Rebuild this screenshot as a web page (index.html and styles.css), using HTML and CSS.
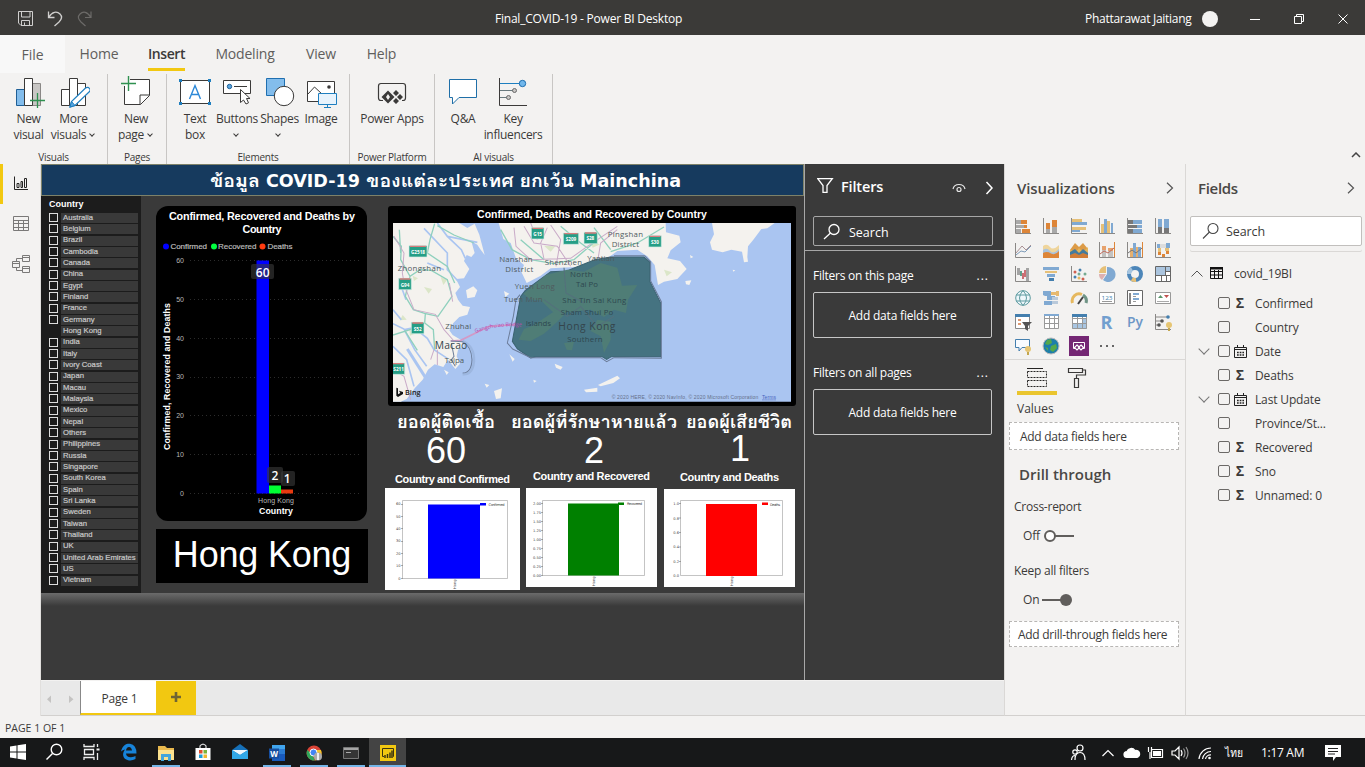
FILE: index.html
```html
<!DOCTYPE html>
<html lang="en">
<head>
<meta charset="utf-8">
<title>Final_COVID-19 - Power BI Desktop</title>
<link rel="stylesheet" href="styles.css">
</head>
<body>
<div class="app">
<header class="titlebar">
  <div class="quick">
    <svg viewBox="18 10 76 18" width="76" height="18" fill="none" stroke="#d0cfce" stroke-width="1"><path d="M19.5 11.5H33.500V25.500H22L19.500 23ZM22.500 11.500V17H31V11.500M22.500 25.500V20.500H30.500V25.500M25.500 22.500V25.500"/><path d="M49.500 11.500V17.500H55.500M50 17C53 11.500 58 11 61 14S62.500 19.500 60 22L55.500 26" stroke-width="1.300"/><path d="M92 11.500V17.500H86M91.500 17C88.500 11.500 84 11 81 14S79.500 19.500 82 22L86.500 26" stroke="#6c6a68" stroke-width="1.200"/></svg>
  </div>
  <span class="doc-title">Final_COVID-19 - Power BI Desktop</span>
  <span class="user">Phattarawat Jaitiang</span><i class="avatar"></i>
  <div class="wincontrols">
    <svg viewBox="1250 10 100 16" width="100" height="16" fill="none" stroke="#fff"><path d="M1250 18.500H1260M1294.500 15.500H1301.500V22.500H1294.500ZM1296.500 15.500V13.500H1303.500V20.500H1301.500M1338.500 13.500L1347.500 22.500M1347.500 13.500L1338.500 22.500"/></svg>
  </div>
</header>
<nav class="tabs">
  <span class="tab file">File</span><span class="tab home">Home</span><span class="tab insert"><b>Insert</b></span><span class="tab modeling">Modeling</span><span class="tab view">View</span><span class="tab help">Help</span>
</nav>
<section class="ribbon">
  <div class="group g-visuals">
    <div class="tools">
      <div class="tool"><svg viewBox="12 76 32 32"><path d="M15.500 89.500h8v16h-8z" fill="#83bdec" stroke="#1f5f96"/><path d="M31.500 83.500h8v22h-8z" fill="#c8c6c4" stroke="#8a8886"/><path d="M23.500 78.500h8v27h-8z" fill="#fff" stroke="#3b3a39"/><path d="M36.500 93V108M29 100.500H44" stroke="#2f9150" stroke-width="1.300"/></svg><span>New<br>visual</span></div>
      <div class="tool"><svg viewBox="57 76 32 32"><path d="M60.500 89.500h8v16h-8zM76.500 83.500h8v22h-8zM68.500 78.500h8v27h-8z" fill="#fff" stroke="#3b3a39"/><path d="M69 107L70.500 101.500L84.500 88Q87 86.500 88.500 88.500T88 92L74 105.500Z" fill="#fff" stroke="#1e7fc0" stroke-width="1.200"/><path d="M69 107l1.500-5.500 3.500 4z" fill="#5ba7e0" stroke="#1e7fc0"/></svg><span>More<br>visuals<i class="chev"></i></span></div>
    </div><small>Visuals</small>
  </div>
  <div class="group g-pages">
    <div class="tools">
      <div class="tool"><svg viewBox="120 76 32 32"><path d="M130 79.500H149.500V95.500L140.500 104.500H124.500V86" fill="#fff" stroke="#3b3a39"/><path d="M149.500 95H140V104.500" fill="none" stroke="#3b3a39"/><path d="M128.500 76V91M121 83.500H136" stroke="#2f9150" stroke-width="1.400"/></svg><span>New<br>page<i class="chev"></i></span></div>
    </div><small>Pages</small>
  </div>
  <div class="group g-elements">
    <div class="tools">
      <div class="tool"><svg viewBox="179 76 32 32"><path d="M180.500 80.500h29v23h-29z" fill="#fff" stroke="#3b3a39"/><path d="M179 79h3v3h-3zM208 79h3v3h-3zM179 102h3v3h-3zM208 102h3v3h-3z" fill="#1e7fc0"/><path d="M189.500 99L195 85.500 200.500 99M191.500 94.500H198.500" fill="none" stroke="#2b88d8" stroke-width="1.400"/></svg><span>Text<br>box</span></div>
      <div class="tool"><svg viewBox="221 76 32 32"><path d="M223.500 80.500h27v13h-27z" fill="#fff" stroke="#3b3a39"/><circle cx="229.500" cy="86.500" r="2.200" fill="#5ba7e0" stroke="#1f5f96"/><path d="M234 86.500H247" stroke="#3b3a39"/><path d="M240.500 89.500V102.500L243.500 100L246 104L248.500 102.800L246.500 98.500H250Z" fill="#fff" stroke="#3b3a39"/></svg><span>Buttons<br><i class="chev solo"></i></span></div>
      <div class="tool"><svg viewBox="264 76 32 32"><path d="M266.500 78.500h18v17h-18z" fill="#83bdec" stroke="#1f6fb0"/><circle cx="284" cy="96" r="9.700" fill="#fff" stroke="#3b3a39"/></svg><span>Shapes<br><i class="chev solo"></i></span></div>
      <div class="tool"><svg viewBox="305 76 32 32"><path d="M307.500 81.500h27v20h-27z" fill="#fff" stroke="#3b3a39"/><path d="M308 94L314.500 87L322 94" fill="none" stroke="#3b3a39"/><circle cx="329" cy="87" r="1.800" fill="#3b3a39"/><path d="M318.500 93.500h18v11h-18zM327.500 104.500v3M324 107.500h7" fill="#e8f3fc" stroke="#1e7fc0"/></svg><span>Image</span></div>
    </div><small>Elements</small>
  </div>
  <div class="group g-platform">
    <div class="tools">
      <div class="tool"><svg viewBox="376 76 32 32"><path d="M383 100.500H381Q378.500 100.500 378.500 98V86Q378.500 83.500 381 83.500H403Q405.500 83.500 405.500 86V98Q405.500 100.500 403 100.500H402" fill="none" stroke="#3b3a39" stroke-width="1.200"/><path fill="#3b3a39" fill-rule="evenodd" d="M388 90.500l6.500 6.500-6.500 6.500-6.500-6.500zM388 94l-2 3 2 3 2-3z"/><path d="M396 90l3 3-3 3-3-3zM400 94l3 3-3 3-3-3zM396 98l3 3-3 3-3-3z" fill="#3b3a39"/></svg><span>Power Apps</span></div>
    </div><small>Power Platform</small>
  </div>
  <div class="group g-ai">
    <div class="tools">
      <div class="tool"><svg viewBox="447 76 32 32"><path d="M449.500 79.500H476.500V97.500H459L452.500 104V97.500H449.500Z" fill="#fff" stroke="#1f6fa8"/></svg><span>Q&amp;A</span></div>
      <div class="tool"><svg viewBox="497 76 32 32"><path d="M499.500 78V105.500H527" fill="none" stroke="#3b3a39"/><path d="M500 83.500h20" stroke="#1e7fc0"/><path d="M500 90.500h14M500 97.500h8" stroke="#69797e"/><circle cx="522.500" cy="83.500" r="3.200" fill="#71b7ec" stroke="#1f6fb0"/><circle cx="514.500" cy="90.500" r="2" fill="#c8c6c4" stroke="#69696a"/><circle cx="508.500" cy="97.500" r="2" fill="#c8c6c4" stroke="#69696a"/></svg><span>Key<br>influencers</span></div>
    </div><small>AI visuals</small>
  </div>
  <svg class="collapse" viewBox="0 0 10 6" width="10" height="6"><path d="M1 5L5 1L9 5" fill="none" stroke="#444" stroke-width="1.500"/></svg>
</section>

<main class="main">
<aside class="rail">
  <div class="rail-item on"><svg viewBox="13 177 16 16" width="16" height="16" fill="none" stroke="#252423"><path d="M14.500 177.500V190.500H28M17 184.500h2v4h-2zM21 182.500h1.500v6h-1.500zM24.500 179.500h2v9h-2z"/></svg></div>
  <div class="rail-item"><svg viewBox="13 216 17 16" width="17" height="16" fill="none" stroke="#7a7978"><path d="M13.500 216.500h15v14h-15zM13.500 220.500h15M13.500 223.500h15M13.500 227.500h15M18.500 220v11M23.500 220v11"/></svg></div>
  <div class="rail-item"><svg viewBox="12 255 19 19" width="19" height="19" fill="none" stroke="#7a7978"><path d="M22.500 255.500h7v6h-7zM12.500 261.500h7v6h-7zM22.500 266.500h7v6h-7zM22.500 258.500H16.500V261.500M16.500 267.500V270.500H22.500M22.500 257.500h7M12.500 263.500h7M22.500 268.500h7"/></svg></div>
</aside>
<div class="center">
<div class="workspace">
<section class="report">
  <h1 class="banner"><svg viewBox="41 164 763 32" width="763" height="32"><text x="210" y="187" textLength="471" lengthAdjust="spacingAndGlyphs" class="banner-text">ข้อมูล COVID-19 ของแต่ละประเทศ ยกเว้น Mainchina</text></svg></h1>
  <div class="canvas">
    <div class="slicer"><b>Country</b>
      <ul><li>Australia</li><li>Belgium</li><li>Brazil</li><li>Cambodia</li><li>Canada</li><li>China</li><li>Egypt</li><li>Finland</li><li>France</li><li>Germany</li><li class="sel">Hong Kong</li><li>India</li><li>Italy</li><li>Ivory Coast</li><li>Japan</li><li>Macau</li><li>Malaysia</li><li>Mexico</li><li>Nepal</li><li>Others</li><li>Philippines</li><li>Russia</li><li>Singapore</li><li>South Korea</li><li>Spain</li><li>Sri Lanka</li><li>Sweden</li><li>Taiwan</li><li>Thailand</li><li>UK</li><li>United Arab Emirates</li><li>US</li><li>Vietnam</li></ul>
    </div>
    <div class="col-chart">
      <svg class="barchart" viewBox="156 206 211 315" width="211" height="315">
        <g class="ct" text-anchor="middle"><text x="262" y="220" textLength="186">Confirmed, Recovered and Deaths by</text><text x="262" y="233" textLength="39">Country</text></g>
        <g class="lg"><circle cx="166" cy="246.500" r="3" fill="#0000ff"/><circle cx="214" cy="246.500" r="3" fill="#00ff40"/><circle cx="262.500" cy="246.500" r="3" fill="#ff3b10"/><text x="170.500" y="249" textLength="36.500">Confirmed</text><text x="218" y="249" textLength="38.500">Recovered</text><text x="267.500" y="249" textLength="25">Deaths</text></g>
        <path d="M190 260.500H360M190 299.500H360M190 338.500H360M190 377.500H360M190 415.500H360M190 454.500H360M190 493.500H360" stroke="#2c2c2c" stroke-dasharray="1 3"/>
        <g class="ax" text-anchor="end"><text x="184" y="263">60</text><text x="184" y="301.500">50</text><text x="184" y="340.500">40</text><text x="184" y="379">30</text><text x="184" y="418">20</text><text x="184" y="457">10</text><text x="184" y="496">0</text></g>
        <path d="M256.500 260.500H269V493.500H256.500Z" fill="#0000ff"/><path d="M269 485.500h12v8h-12z" fill="#00ff33"/><path d="M281 489.500h12v4h-12z" fill="#e83a10"/>
        <g fill="#3a3a3a" fill-opacity=".6"><rect x="251" y="264" width="23" height="15" rx="2"/><rect x="267" y="467" width="16" height="16" rx="2"/><rect x="281" y="471" width="14" height="15" rx="2"/></g>
        <g class="dl" text-anchor="middle"><text x="262.700" y="277">60</text><text x="275" y="480">2</text><text x="287.300" y="483">1</text></g>
        <text class="ax" x="258" y="503" textLength="36">Hong Kong</text><text class="at" x="259" y="514" textLength="34">Country</text>
        <text class="at" transform="translate(170 450) rotate(-90)" textLength="147">Confirmed, Recovered and Deaths</text>
      </svg>
      <div class="namecard">Hong Kong</div>
    </div>
    <div class="col-map">
      <div class="mapcard"><h2>Confirmed, Deaths and Recovered by Country</h2>
      <svg class="map" viewBox="27 70 1194 536" width="398" height="178.700" preserveAspectRatio="none">
        <path fill="#aac5f1" d="M27 70H1221V606H27Z"/>
        <g fill="#f4f2ee">
          <path d="M27 70H226L250 85 272 72 286 105 302 166 290 150 280 135 262 125 272 160 262 172 248 166 240 184 256 208 240 236 216 238 228 262 214 280 222 300 236 318 258 322 250 345 226 352 208 370 196 392 206 406 230 420 240 440 222 450 218 470 228 492 214 508 192 480 178 502 152 494 132 510 116 540 92 566 68 598 50 606H27Z"/>
          <path d="M246 272L268 260 280 272 272 292 250 296Z"/>
          <path d="M344 70H845L846 98 886 108 890 128 860 152 850 176 888 184 908 208 880 238 840 246 822 256 812 196 790 170 760 150 700 154 678 170 620 200 500 206 470 228 428 250 412 216 420 196 396 176 380 130 358 118Z"/>
          <path d="M984 70H1172L1150 86 1132 88 1108 120 1092 140 1090 172 1092 186 1080 188 1074 156 1042 150 1016 158 984 150 978 128 990 104Z"/>
          <path d="M904 244L922 242 916 256 906 254ZM642 556L700 528 708 536 688 550 650 560ZM600 570L640 564 640 576 606 578ZM512 492L536 502 530 510 516 504ZM330 574L354 566 350 596 336 598ZM376 464L392 478 386 486ZM302 552l14 4-8 8zM448 540l10 4-8 5zM360 274L376 282 364 292ZM918 166L928 172 920 176ZM1046 210l8 2-6 4zM180 510l14 8-6 8z"/>
        </g>
        <g fill="#d3e1bb" opacity=".75"><path d="M120 262l24 6-10 14zM170 232l20 8-12 16zM480 138l34 2-14 16zM620 126l28 8-22 10zM840 210l24 8-16 12zM76 390l22 10-20 8zM86 228l16 8-12 8zM56 346l12 14-20 2z"/></g>
        <g fill="none" stroke="#aac5f1" stroke-width="5"><path d="M160 70L190 110 232 150 244 176M190 110 280 128M120 86L190 160 190 210 222 244M27 372L60 388 92 450 128 500M62 390 90 384 130 416 150 450 190 476M27 330L52 360M27 440L68 480 90 560M48 250L66 300M130 190L180 210"/><path d="M70 448L126 536" stroke-width="9"/></g>
        <g fill="none" stroke="#8fd0bd" stroke-width="4"><path d="M27 110L52 140 50 180 78 230 108 210 142 212 190 240 204 290 162 350 124 342 122 370 148 390 152 450M152 72L138 120 130 160 190 200 212 250M27 406L90 386 120 370M62 392L100 452M78 230L64 290 88 330 124 342M160 78L210 106 270 130M50 160L46 90M350 90L384 150 440 180 510 192 570 180 640 120M410 120L480 180M530 80L590 130 630 160M680 150L650 110 630 84M680 156L760 130 840 82"/></g>
        <g fill="none" stroke="#c9abc8" stroke-width="3"><path d="M30 110L60 160 55 220 62 260 90 330 154 344 180 390 210 424M420 80L450 130 520 140 560 200M390 84L396 140 440 180 560 176 610 140 700 80M440 70L460 120M490 84L470 130 480 178M500 76L530 120 516 200M700 90L650 130 640 190M27 510L60 530 80 600M196 250L206 306M160 450L160 496M150 450L140 480"/></g>
        <g fill="none" stroke="#d29ac6" stroke-width="5"><path d="M200 424L230 422 316 380 410 374"/></g>
        <path d="M385 425L410 290 424 272 500 216 548 214 632 180 680 172H780L798 188 798 246 830 310V471H682L668 479 654 471H456L440 475 400 448Z" fill="#457381" stroke="#3b6270" stroke-width="3"/>
        <g fill="#4f7d76"><path d="M418 282L486 226 550 210 600 216 650 190 700 204 714 258 760 256 732 300 726 340 690 330 660 352 620 330 560 336 510 340 470 302 440 300Z"/><path d="M450 376L530 322 552 334 520 366 480 402 440 424 404 420 420 388ZM640 360L680 366 680 420 660 460 650 410 620 394ZM540 430L570 426 564 452 548 450Z"/></g>
        <path d="M408 285L396 300 388 350 370 430 386 448 440 474H650L668 486 690 474 832 476V306L800 244V186L782 168 690 168M200 424L236 426Q262 440 264 480Q262 520 236 520M202 430L210 470 202 480 214 500" fill="none" stroke="#6b7c99" stroke-width="3"/>
        <path d="M236 424Q272 440 270 485Q266 526 236 524" fill="none" stroke="#90a9d0" stroke-width="7" opacity=".5"/>
        <g fill="none" stroke="#54707c" stroke-width="3"><path d="M480 300L550 350 590 320 640 380 690 350M540 204L546 280 600 310"/></g>
        <g fill="#259e86" stroke="#d5ede6" stroke-width="2"><path d="M75 138h54v34H75zM44 236h38v34H44zM82 368h38v34H82zM24 490h38v34H24zM442 84h38v34h-38zM538 100h46v34h-46zM600 98h40v34h-40zM794 108h38v34h-38z"/></g>
        <g stroke="#d87c7c" stroke-width="4"><path d="M78 140h48M47 238h32M85 370h32M27 492h32M445 86h32M541 102h40M603 100h34M797 110h32"/></g>
        <g class="shield" text-anchor="middle"><text x="102" y="163">G2518</text><text x="63" y="262">G94</text><text x="101" y="393">S52</text><text x="44" y="515">S211</text><text x="461" y="109">G15</text><text x="561" y="125">S209</text><text x="619" y="121">S28</text><text x="813" y="133">S30</text></g>
        <g class="ml"><text x="41" y="214" textLength="130">Zhongshan</text><text x="346" y="188" textLength="100">Nanshan</text><text x="364" y="217" textLength="84">District</text><text x="482" y="196" textLength="112">Shenzhen</text><text x="610" y="185" textLength="82">Yantian</text><text x="671" y="113" textLength="106">Pingshan</text><text x="683" y="141" textLength="82">District</text><text x="392" y="268" textLength="120">Yuen Long</text><text x="360" y="307" textLength="116">Tuen Mun</text><text x="184" y="389" textLength="78">Zhuhai</text><text x="182" y="489" textLength="58">Taipa</text></g>
        <g class="ml inside"><text x="558" y="231" textLength="68">North</text><text x="576" y="262" textLength="66">Tai Po</text><text x="535" y="310" textLength="192">Sha Tin Sai Kung</text><text x="530" y="346" textLength="158">Sham Shui Po</text><text x="425" y="378" textLength="76">Islands</text><text x="550" y="427" textLength="106">Southern</text></g>
        <g class="ml big"><text x="152" y="449" textLength="98">Macao</text><text x="523" y="390" textLength="171">Hong Kong</text></g>
        <path id="bridge" d="M275 400Q330 376 410 380" fill="none"/><text class="bridge"><textPath href="#bridge">Gangzhu'ao Bridge</textPath></text>
        <path d="M37 564L42 566V584L49 580 45 573 57 577V583L42 592 37 588Z" fill="#111"/>
        <text class="bing" x="63" y="585" textLength="47">Bing</text>
        <g class="copy"><text x="683" y="597" textLength="440">© 2020 HERE, © 2020 NavInfo, © 2020 Microsoft Corporation</text><text x="1134" y="597" textLength="42" class="terms">Terms</text></g>
      </svg></div>
      <svg class="kpis" viewBox="385 406 419 82" width="419" height="82">
        <g class="th"><text x="397" y="428" textLength="98" lengthAdjust="spacingAndGlyphs">ยอดผู้ติดเชื้อ</text><text x="511" y="428" textLength="166" lengthAdjust="spacingAndGlyphs">ยอดผู้ที่รักษาหายแล้ว</text><text x="686" y="428" textLength="106" lengthAdjust="spacingAndGlyphs">ยอดผู้เสียชีวิต</text></g>
        <g class="num"><text x="426" y="463" textLength="40">60</text><text x="584" y="463">2</text><text x="730" y="461">1</text></g>
        <g class="cap"><text x="395" y="483" textLength="115">Country and Confirmed</text><text x="533" y="480" textLength="117">Country and Recovered</text><text x="680" y="481" textLength="99">Country and Deaths</text></g>
      </svg>
      <div class="plots">
        <svg class="p1" viewBox="385 488 135 102" width="135" height="102"><path class="box" d="M402.500 500.500h105v78h-105z"/><path fill="#00f" d="M428 504.500h52v74h-52zM480 503h6v2.500h-6z"/><g class="tk" text-anchor="end"><text x="400.500" y="505">60</text><text x="400.500" y="517.500">50</text><text x="400.500" y="530">40</text><text x="400.500" y="542">30</text><text x="400.500" y="554.500">20</text><text x="400.500" y="567">10</text><text x="400.500" y="579.500">0</text></g><path class="ticks" d="M401 504.500h2m-2 12h2m-2 12h2m-2 13h2m-2 12h2m-2 12h2m-2 13h2"/><text class="tk" x="488.500" y="505.500" textLength="16">Confirmed</text><text class="tk" transform="translate(455.500 589) rotate(-90)">Hong</text></svg>
        <svg class="p2" viewBox="526 488 131 99" width="131" height="99"><path class="box" d="M542.500 500.500h102v75h-102z"/><path fill="#008000" d="M568 503.500h51v72h-51zM618 502.500h6v2.500h-6z"/><g class="tk" text-anchor="end"><text x="541" y="504.500">2.00</text><text x="541" y="513.500">1.75</text><text x="541" y="522.500">1.50</text><text x="541" y="531.500">1.25</text><text x="541" y="540.500">1.00</text><text x="541" y="549.500">0.75</text><text x="541" y="558.500">0.50</text><text x="541" y="567.500">0.25</text><text x="541" y="576.500">0.00</text></g><path class="ticks" d="M541 503.500h2m-2 9h2m-2 9h2m-2 9h2m-2 9h2m-2 9h2m-2 9h2m-2 9h2m-2 9h2"/><text class="tk" x="627" y="505" textLength="15">Recovered</text><text class="tk" transform="translate(594.500 586) rotate(-90)">Hong</text></svg>
        <svg class="p3" viewBox="664 489 131 98" width="131" height="98"><path class="box" d="M680.500 500.500h102v75h-102z"/><path fill="#f00" d="M706 504h51v72h-51zM762 502.500h6v2.500h-6z"/><g class="tk" text-anchor="end"><text x="679" y="505">1.0</text><text x="679" y="519.500">0.8</text><text x="679" y="534">0.6</text><text x="679" y="548">0.4</text><text x="679" y="562.500">0.2</text><text x="679" y="577">0.0</text></g><path class="ticks" d="M679 503.500h2m-2 14.500h2m-2 14.500h2m-2 14.500h2m-2 14.500h2"/><text class="tk" x="770" y="505.500" textLength="10">Deaths</text><text class="tk" transform="translate(732.500 586) rotate(-90)">Hong</text></svg>
      </div>
    </div>
  </div>
  <div class="edge"></div>
</section>
<aside class="filters">
  <div class="fhead"><svg viewBox="817 179 17 16" width="17" height="16"><path d="M817.700 179.700H832.300L827 186.500V193.300H823V186.500Z" fill="none" stroke="#fff" stroke-width="1.300"/></svg><b>Filters</b>
    <svg class="eye" viewBox="952 181 14 12" width="14" height="12" fill="none" stroke="#e6e6e6" stroke-width="1.200"><path d="M953 188Q954 183.500 959 183.500T965 188"/><circle cx="959" cy="188.500" r="2"/></svg>
    <svg class="fgo" viewBox="985 181 9 14" width="9" height="14"><path d="M986.500 182L992 188 986.500 194" fill="none" stroke="#fff" stroke-width="1.500"/></svg></div>
  <div class="fsearch"><svg viewBox="823 222 18 18" width="18" height="18" fill="none" stroke="#fff" stroke-width="1.300"><circle cx="834" cy="228.500" r="5"/><path d="M830.500 232L824 238"/></svg>Search</div>
  <div class="fsec"><p>Filters on this page<i>...</i></p><div class="well">Add data fields here</div></div>
  <div class="fsec"><p>Filters on all pages<i>...</i></p><div class="well">Add data fields here</div></div>
</aside>
</div>
<footer class="pagetabs">
  <div class="arrows"><svg viewBox="47 694 28 10" width="28" height="10" fill="#c4c3c2"><path d="M51 695.500V703L47 699.200ZM69 695.500V703L73.500 699.200Z"/></svg></div>
  <div class="page">Page 1</div><div class="plus"><svg viewBox="0 0 12 12" width="12" height="12"><path d="M6 1V11M1 6H11" stroke="#6f6534" stroke-width="2.600"/></svg></div>
</footer>
</div>

<aside class="viz">
  <div class="panehead"><b>Visualizations</b><svg viewBox="0 0 8 12" width="8" height="12"><path d="M1 .700L6.500 6 1 11.300" fill="none" stroke="#555" stroke-width="1.200"/></svg></div>
  <div class="icons">
    <svg viewBox="0 0 18 18"><path d="M2 3h5v4H2zM2 8h9v3H2zM2 12h5v4H2z" fill="#a8a8a8"/><path d="M7 3h6v4H7zM10 8h3v3h-3zM8 12h8v4H8z" fill="#dd8538"/><path class="axis" d="M1.500 1V16.500H17"/></svg>
    <svg viewBox="0 0 18 18"><path d="M4 12h4v4H4zM10 10h5v6h-5z" fill="#a8a8a8"/><path d="M4 6h4v6H4zM10 3h5v7h-5z" fill="#dd8538"/><path class="axis" d="M1.500 1V16.500H17"/></svg>
    <svg viewBox="0 0 18 18"><path d="M2 2h10v3H2zM2 10h14v3H2z" fill="#e6c078"/><path d="M2 5h15v3H2zM2 13h8v2H2z" fill="#80a9d2"/><path class="axis" d="M1.500 1V16.500H17"/></svg>
    <svg viewBox="0 0 18 18"><path d="M3 7h3v9H3zM9 4h3v12H9z" fill="#e6c078"/><path d="M6 2h3v14H6zM13 6h2v10h-2z" fill="#80a9d2"/><path class="axis" d="M1.500 1V16.500H17"/></svg>
    <svg viewBox="0 0 18 18"><path d="M2 3h5v4H2zM2 8h9v3H2zM2 12h5v4H2z" fill="#777"/><path d="M7 3h9v4H7zM11 8h5v3h-5zM7 12h9v4H7z" fill="#80a9d2"/><path class="axis" d="M1.500 1V16.500H17"/></svg>
    <svg viewBox="0 0 18 18"><path d="M4 10h4v6H4zM10 11h5v5h-5z" fill="#777"/><path d="M4 2h4v8H4zM10 2h5v9h-5z" fill="#80a9d2"/><path class="axis" d="M1.500 1V16.500H17"/></svg>
    <svg viewBox="0 0 18 18"><path class="axis" d="M1.500 2V16.500H17"/><path d="M2 12L8 5 12 9 17 4" fill="none" stroke="#a99194"/><path d="M2 14L7 10 11 11 17 5" fill="none" stroke="#7d9bb8"/></svg>
    <svg viewBox="0 0 18 18"><path d="M1 5Q5 2 8 6T17 4V12L8 12 1 9Z" fill="#efd59c"/><path d="M1 9Q5 6 8 10T17 8V14H1Z" fill="#a8c3de"/><path d="M1 12Q5 10 9 12.500T17 10V17H1Z" fill="#dd8538"/></svg>
    <svg viewBox="0 0 18 18"><path d="M0 9L5 2 9 6 13 2 18 8V17H0Z" fill="#dc9b47"/><path d="M0 8L5 12 9 7 13 11 18 6V12H0Z" fill="#e5b65b"/><path d="M0 11L5 8 9 12 13 8 18 12V15H0Z" fill="#447b9d"/><path d="M0 14L5 12 9 14 13 12 18 14V17H0Z" fill="#d17d37"/></svg>
    <svg viewBox="0 0 18 18"><path d="M4 5h4v4H4zM10 7h5v3h-5z" fill="#e7a26c"/><path d="M4 9h4v7H4zM10 10h5v6h-5z" fill="#c4c2c0"/><path class="axis" d="M1.500 1V16.500H17"/><path d="M16.500 1V16" stroke="#dd8538"/><path d="M2 13L6 10 10 12 16 7" fill="none" stroke="#c26b5a"/></svg>
    <svg viewBox="0 0 18 18"><path d="M4 7h3v9H4zM10 6h2v10h-2z" fill="#e6b06e"/><path d="M7 2h3v14H7zM12 6h3v10h-3z" fill="#80a9d2"/><path class="axis" d="M1.500 1V16.500H17"/><path d="M16.500 1V16" stroke="#dd8538"/><path d="M2 12L6 9 10 12 16 7" fill="none" stroke="#777"/></svg>
    <svg viewBox="0 0 18 18"><path d="M3 3h3v4H3zM12 2h4v5h-4z" fill="#80a9d2"/><path d="M4 7h3v4H4zM11 7h4v3h-4z" fill="#e6c078"/><path d="M4 11h3v3H4zM8 13h3v3H8zM12 10h3v3h-3z" fill="#dd8538"/><path d="M6 3h6v4H6z" fill="#ddd"/><path class="axis" d="M1.500 1V16.500H17"/></svg>
    <svg viewBox="0 0 18 18"><path d="M3 3h3v7H3zM12 3h3v13h-3z" fill="#a3a3a3"/><path d="M6 6h2v5H6z" fill="#61a08b"/><path d="M8 8h2v6H8zM10 5h2v7h-2z" fill="#cc6f74"/><path class="axis" d="M1.500 1V16.500H17"/></svg>
    <svg viewBox="0 0 18 18"><path d="M1 2h16v3H1zM5 9h8v3H5z" fill="#80a9d2"/><path d="M3 6h12v2H3z" fill="#e6c078"/><path d="M7 13h5v3H7z" fill="#447fae"/></svg>
    <svg viewBox="0 0 18 18"><path class="axis" d="M1.500 1V16.500H17"/><g fill="#447fae"><circle cx="10" cy="5" r="1.500"/><circle cx="5" cy="12" r="1.500"/></g><g fill="#cf5f50"><circle cx="5" cy="7" r="1.500"/><circle cx="13" cy="14" r="1.500"/></g><g fill="#75aa90"><circle cx="9" cy="9" r="1.500"/><circle cx="15" cy="9" r="1.500"/></g><circle cx="9" cy="13" r="1.500" fill="#e6b85e"/></svg>
    <svg viewBox="0 0 18 18"><path d="M9 9V2A7.500 7.500 0 1 1 5 15Z" fill="#80a9d2"/><path d="M8 9L4 15A7 7 0 0 1 1 9Z" fill="#ddb0b0"/><path d="M8 8H1A7 7 0 0 1 8 1Z" fill="#e6c078"/></svg>
    <svg viewBox="0 0 18 18" fill="none" stroke-width="4"><circle cx="9" cy="9" r="6" stroke="#4d86b9"/><path d="M3 9A6 6 0 0 1 6 4" stroke="#a5c4df"/><path d="M6 14A6 6 0 0 0 10 15" stroke="#e6c078"/></svg>
    <svg viewBox="0 0 18 18"><path d="M1.500 1.500h15v15h-15z" fill="#fff"/><path d="M2 2h9v8H2zM12 2h5v4h-5z" fill="#abc5df"/><path d="M1.500 1.500h15v15h-15zM1.500 10.500h15M11.500 1.500v9M11.500 6.500h5M7.500 10.500v6M12.500 10.500v6" fill="none" stroke="#666"/></svg>
    <svg viewBox="0 0 18 18" fill="none" stroke="#5d9a9f"><circle cx="9" cy="9" r="7.300" fill="#eef7fb"/><path d="M9 1.500Q2 9 9 16.500M9 1.500Q16 9 9 16.500M2 6H16M2 12H16"/></svg>
    <svg viewBox="0 0 18 18"><path d="M1 2h8v5H3L1 6zM5 7h8v4H5zM2 12h8v4H2z" fill="#80a9d2"/><path d="M9 3h5v3H9zM14 2h3v5h-3z" fill="#e6b970"/><path d="M10 8h6v3h-6zM10 12h6v3h-6z" fill="#b9c9da"/></svg>
    <svg viewBox="0 0 18 18" fill="none"><path d="M2.500 14A7 7 0 0 1 12 5.500" stroke="#e6b85e" stroke-width="3"/><path d="M13 6A7 7 0 0 1 16 14" stroke="#6f9485" stroke-width="3"/><path d="M8 15L13 8" stroke="#444" stroke-width="2"/></svg>
    <svg viewBox="0 0 18 18"><path d="M1.500 3.500h15v11h-15z" fill="#fff" stroke="#999"/><text x="3.500" y="10.500" textLength="11" lengthAdjust="spacingAndGlyphs" class="n123">123</text><path d="M4 12.500h10" stroke="#999"/></svg>
    <svg viewBox="0 0 18 18"><path d="M1.500 1.500h15v15h-15z" fill="#fff" stroke="#666"/><path d="M4 4v11" stroke="#888" stroke-width="2"/><path d="M7 5h6M7 10h6" stroke="#80a9d2" stroke-width="2"/><path d="M7 7.500h3M7 12.500h3" stroke="#999"/></svg>
    <svg viewBox="0 0 18 18"><path d="M1.500 3.500h15v11h-15z" fill="#fff" stroke="#999"/><path d="M4 9l2.500-3L9 9z" fill="#58956a"/><path d="M10 6h5l-2.500 3z" fill="#c0504d"/><path d="M3 12.500h12" stroke="#aaa"/></svg>
    <svg viewBox="0 0 18 18"><path d="M1.500 2.500h14v13h-14z" fill="#fff" stroke="#888"/><path d="M1 1h15v3H1z" fill="#447fae"/><path d="M4 6h3v2H4zM4 10h3v2H4z" fill="#dd9a72"/><path d="M8 9h10l-4 4v5l-3-2v-3z" fill="#555"/></svg>
    <svg viewBox="0 0 18 18"><path d="M2.500 1.500h14v14h-14zM2.500 5.500h14M2.500 10.500h14M7.500 2v14M12.500 2v14" fill="#fff" stroke="#999"/><path d="M2 1h15v2H2z" fill="#80a9d2"/></svg>
    <svg viewBox="0 0 18 18"><path d="M2.500 1.500h14v14h-14z" fill="#fff"/><path d="M12 6h5v10h-5zM2 11h15v5H2z" fill="#a9c6e2"/><path d="M2.500 1.500h14v14h-14zM2.500 5.500h14M2.500 10.500h14M7.500 2v14M12.500 2v14" fill="none" stroke="#999"/><path d="M2 1h15v3H2z" fill="#447fae"/></svg>
    <svg viewBox="0 0 18 18"><text x="2.500" y="15.500" class="letterR">R</text></svg>
    <svg viewBox="0 0 18 18"><text x="1" y="14" textLength="16" lengthAdjust="spacingAndGlyphs" class="letterPy">Py</text></svg>
    <svg viewBox="0 0 18 18"><path class="axis" d="M1.500 1V16.500H17M2 4h13M2 8h7M2 12h4"/><circle cx="14" cy="4" r="1.800" fill="#447fae"/><circle cx="8" cy="8" r="1.800" fill="#555"/><circle cx="5" cy="12" r="1.800" fill="#555"/><circle cx="15" cy="12" r="3" fill="#e6c573"/><path d="M14 15h2v3h-2z" fill="#c3a64f"/></svg>
    <svg viewBox="0 0 18 18"><path d="M1.500 2.500h14v8H8L5 14v-3.500H1.500z" fill="#f8fbff" stroke="#447fae"/><circle cx="14" cy="12" r="3" fill="#e6c573"/><path d="M13 15h2v3h-2z" fill="#c3a64f"/></svg>
    <svg viewBox="0 0 18 18"><circle cx="9" cy="9" r="8" fill="#1e7eaa" stroke="#bbb"/><path d="M5 3l4-1 1 4-4 2-3-1zM9 9l5-2 1 4-4 4-3-2zM3 10l3 1v3z" fill="#55a84b"/></svg>
    <svg class="purple" viewBox="0 0 20 20"><path d="M0 0h20v20H0z" fill="#742774"/><path d="M6 12.500H4.500v-6h11v6H14" fill="none" stroke="#fff"/><path d="M8 9l2.500 2.500L8 14l-2.500-2.500zM12 9l2.500 2.500L12 14l-2.500-2.500z" fill="none" stroke="#fff" stroke-width="1.200"/></svg>
    <svg viewBox="0 0 18 18" fill="#666"><path d="M2 8h2v2H2zM8 8h2v2H8zM14 8h2v2h-2z"/></svg>
  </div>
  <div class="modes"><div class="mode on"><svg viewBox="1026 366 22 22" width="22" height="22" fill="none" stroke="#252423"><path d="M1027 367.500h16"/><path d="M1027.500 370.500h19v6h-19zM1027.500 379.500h19v6h-19z" stroke-dasharray="2 1"/></svg></div><div class="mode"><svg viewBox="1067 366 20 22" width="20" height="22" fill="none" stroke="#3b3a39" stroke-width="1.200"><path d="M1068.500 367.500h14v4h-14zM1082.500 369h3v5h-9v3.500M1074.500 377.500h4v9h-4z"/></svg></div></div>
  <p class="values">Values</p><div class="drop">Add data fields here</div>
  <h3>Drill through</h3>
  <p class="opt">Cross-report</p>
  <div class="toggle">Off<svg viewBox="0 0 31 14" width="31" height="14"><path d="M11 7H31" stroke="#605e5c" stroke-width="2"/><circle cx="7" cy="7" r="5" fill="#fff" stroke="#605e5c" stroke-width="2"/></svg></div>
  <p class="opt">Keep all filters</p>
  <div class="toggle">On<svg viewBox="0 0 31 14" width="31" height="14"><path d="M0 7H20" stroke="#605e5c" stroke-width="2"/><circle cx="24" cy="7" r="6" fill="#605e5c"/></svg></div>
  <div class="drop last">Add drill-through fields here</div>
</aside>

<aside class="fields">
  <div class="panehead"><b>Fields</b><svg viewBox="0 0 8 12" width="8" height="12"><path d="M1 .700L6.500 6 1 11.300" fill="none" stroke="#555" stroke-width="1.200"/></svg></div>
  <div class="search"><svg viewBox="0 0 18 18" width="18" height="18" fill="none" stroke="#444" stroke-width="1.100"><circle cx="11" cy="6.500" r="5"/><path d="M7.500 10L1 16.500"/></svg>Search</div>
  <div class="frow table"><svg viewBox="0 0 12 7" width="12" height="7"><path d="M.5 6.500L6 1 11.500 6.500" fill="none" stroke="#555"/></svg><svg class="tb" viewBox="0 0 13 12" width="13" height="12"><path d="M.5 .5h12v11H.5zM1 4.500h12M1 8h12M4.500 3v9M8.500 3v9" fill="none" stroke="#111"/><path d="M0 0h13v2.500H0z" fill="#111"/></svg><span>covid_19BI</span></div>
  <div class="frow"><i></i><u></u><em>Σ</em><span>Confirmed</span></div>
  <div class="frow"><i></i><u></u><em></em><span>Country</span></div>
  <div class="frow"><i class="open"></i><u></u><svg class="cal" viewBox="0 0 13 13" width="13" height="13"><path d="M.5 2.500h12v10H.5zM0 4.500h13M3.500 0v3M9.500 0v3" fill="none" stroke="#222"/><path d="M3 7.500h7M3 10h7" stroke="#222" stroke-width="1.500" stroke-dasharray="1.700 1"/></svg><span>Date</span></div>
  <div class="frow"><i></i><u></u><em>Σ</em><span>Deaths</span></div>
  <div class="frow"><i class="open"></i><u></u><svg class="cal" viewBox="0 0 13 13" width="13" height="13"><path d="M.5 2.500h12v10H.5zM0 4.500h13M3.500 0v3M9.500 0v3" fill="none" stroke="#222"/><path d="M3 7.500h7M3 10h7" stroke="#222" stroke-width="1.500" stroke-dasharray="1.700 1"/></svg><span>Last Update</span></div>
  <div class="frow"><i></i><u></u><em></em><span>Province/St...</span></div>
  <div class="frow"><i></i><u></u><em>Σ</em><span>Recovered</span></div>
  <div class="frow"><i></i><u></u><em>Σ</em><span>Sno</span></div>
  <div class="frow"><i></i><u></u><em>Σ</em><span>Unnamed: 0</span></div>
</aside>
</main>
<div class="status">PAGE 1 OF 1</div>
<footer class="taskbar">
  <div class="apps">
    <div class="ta"><svg viewBox="0 0 20 20"><path d="M2 4.500L8.500 3.500V9.500H2zM9.500 3.300L18 2V9.500H9.500zM2 10.500H8.500V16.500L2 15.500zM9.500 10.500H18V18L9.500 16.700z" fill="#fff"/></svg></div>
    <div class="ta"><svg viewBox="0 0 20 20" fill="none" stroke="#fff" stroke-width="1.400"><circle cx="11.500" cy="7.500" r="5.300"/><path d="M7.500 11.500L1.500 17.500"/></svg></div>
    <div class="ta"><svg viewBox="0 0 20 20" fill="none" stroke="#eee" stroke-width="1.300"><path d="M2 2v2.500h10V2M2 18v-2.500h10V18M2.500 7.500h9v5h-9zM15.500 2v3M15.500 11v7"/><path d="M14.500 7.500h3" stroke-width="2"/></svg></div>
    <div class="ta"><svg viewBox="0 0 20 20"><path d="M2 9.500C4 2 8 1.500 11 1.800Q17.500 3 17.500 11.500H7Q7.500 15.500 12 15.300 15 15 16.500 14V17Q13 19 9 18.200C4 17 2.500 12 6 7.500Q3.500 8 2 9.500ZM7 8.500H13Q12.500 5 10 5T7 8.500Z" fill="#1783d9" fill-rule="evenodd"/></svg></div>
    <div class="ta run"><svg viewBox="0 0 20 20"><path d="M2 3H9L11 5H18V17H2Z" fill="#e9b94e"/><path d="M2 7H18V17H2Z" fill="#fbe18f"/><path d="M5 18V11H15V18H12V14H8V18Z" fill="#43a5dc"/></svg></div>
    <div class="ta"><svg viewBox="0 0 20 20"><path d="M7 6V3.500Q10 .500 13 3.500V6" fill="none" stroke="#fff"/><path d="M2.500 6H17.500V18H2.500Z" fill="#fff"/><path d="M6 8h3.500v3.500H6z" fill="#e04e30"/><path d="M10.500 8H14v3.500h-3.500z" fill="#7bb43c"/><path d="M6 12.500h3.500V16H6z" fill="#1d9dd9"/><path d="M10.500 12.500H14V16h-3.500z" fill="#f2b72f"/></svg></div>
    <div class="ta"><svg viewBox="0 0 20 20"><path d="M2 8L10 2 18 8V17H2Z" fill="#1670b8"/><path d="M2 8H18L10 13Z" fill="#eef7fd"/><path d="M2 8L10 13 18 8V17H2Z" fill="#31a8e8"/></svg></div>
    <div class="ta run"><svg viewBox="0 0 20 20"><path d="M5 2h13v16H5z" fill="#41a5ee"/><path d="M5 7h13v11H5z" fill="#185abd"/><path d="M5 6h13v5H5z" fill="#2b7cd3"/><path d="M2 5.500h10v10H2z" fill="#174e9e"/><text x="7" y="13.500" text-anchor="middle" class="w">W</text></svg></div>
    <div class="ta run"><svg viewBox="0 0 20 20"><circle cx="10" cy="10" r="7.500" fill="#db4437"/><path d="M3.300 7L8 11 11 17.500A7.500 7.500 0 0 1 3.300 7Z" fill="#2fa65a"/><path d="M10 7H17A7.500 7.500 0 0 1 11 17.500L13 11Z" fill="#f5c52d"/><circle cx="9.500" cy="9.500" r="3.500" fill="#4285f4" stroke="#fff"/><circle cx="14" cy="13.500" r="4" fill="#aaa"/><path d="M14 10V17" stroke="#eee" stroke-width="2"/></svg></div>
    <div class="ta run"><svg viewBox="0 0 20 20"><path d="M2.500 4.500h15v11h-15z" fill="#353535" stroke="#777"/><path d="M3 5h14v2H3z" fill="#a5a5a5"/><path d="M5 9.500h5" stroke="#aaa"/></svg></div>
    <div class="ta run active"><svg viewBox="0 0 20 20"><path d="M2 2h16v16H2z" fill="#f2c811"/><path d="M6 13.500H4.500v-8h11v8H15" fill="none" stroke="#3c3510"/><path d="M7 15v-3M9.500 15v-4M12 15V9.500M14 15V7.500" stroke="#3c3510" stroke-width="1.500"/></svg></div>
  </div>
  <svg class="tray" viewBox="1068 738 178 29" width="178" height="29" fill="none" stroke="#fff" stroke-width="1.200"><circle cx="1080" cy="748" r="3"/><circle cx="1075" cy="752" r="2.200"/><path d="M1071.500 760Q1072 755.500 1075 755.500M1075 760Q1075 752.500 1080 752.500T1085 760M1102.500 756L1108 750.500 1113.500 756"/><path d="M1127 757.500a3 3 0 0 1 0-6 4.500 4.500 0 0 1 8-1 3.500 3.500 0 0 1 2 7z" fill="#fff"/><path d="M1151.500 749.500h11v8h-11z"/><path d="M1153 751h8v5h-8z" fill="#fff" stroke="none"/><path d="M1148.500 747v5M1151.500 747v5M1150 752v7"/><path d="M1172 751h3l4-4v12l-4-4h-3zM1181 750q2 3 0 6" /><path d="M1183.500 748.500q3 4.500 0 9M1186 747q4 6 0 12" stroke="#999"/><path d="M1199 759A12 12 0 0 1 1211 748M1202.500 759A8.500 8.500 0 0 1 1211 751.500M1205.500 759A5 5 0 0 1 1211 755"/><circle cx="1209.500" cy="758" r="1.300" fill="#fff" stroke="none"/><text x="1225" y="757" class="lang" textLength="18" lengthAdjust="spacingAndGlyphs">ไทย</text></svg>
  <span class="clock">1:17 AM</span>
  <svg class="note" viewBox="0 0 16 16" width="16" height="16"><path d="M0 0h16v12h-5l-3 4v-4H0z" fill="#fff"/><path d="M3 3.500h10M3 6.500h10M3 9h7" stroke="#222"/></svg>
</footer>
</div>
</body>
</html>
```

FILE: styles.css
```css
* { box-sizing: border-box; }
body { margin: 0; font-family: "Open Sans", "Noto Sans", sans-serif; font-size: 12px; color: #3b3a39; background: #f3f2f1; }
svg { display: block; flex: none; }
p, h1, h2, h3, ul { margin: 0; padding: 0; }
i, em { font-style: normal; }
.app { width: 1365px; height: 767px; overflow: hidden; display: grid; grid-template-rows: 35px 38px 91px 552px 22px 29px; }

.titlebar { background: #3b3a38; color: #fff; display: flex; align-items: center; font-size: 12px; padding-top: 2px; }
.quick { width: 495px; padding-left: 17px; }
.doc-title { width: 590px; letter-spacing: -.22px; }
.user { width: 117px; letter-spacing: -.28px; }
.avatar { width: 16px; height: 16px; border-radius: 50%; background: #f3f2f1; }
.wincontrols { margin-left: 32px; }

.tabs { display: flex; font-size: 14px; color: #605e5c; letter-spacing: -.2px; }
.tab { height: 36px; display: flex; align-items: center; justify-content: center; border-bottom: 3px solid transparent; padding-top: 3px; }
.file { width: 65px; height: 38px; background: #f8f8f8; letter-spacing: 0; }
.home { width: 68px; }
.insert { width: 37px; margin: 0 15px; border-color: #f2c811; color: #3b3a39; }
.insert b { font-weight: 600; letter-spacing: -.4px; }
.modeling { width: 90px; }
.view { width: 62px; }
.help { width: 59px; }

.ribbon { display: flex; }
.group { border-right: 1px solid #c8c6c4; padding-top: 3px; display: flex; flex-direction: column; justify-content: space-between; margin-top: 1px; }
.tools { display: grid; justify-content: start; }
.tool { display: flex; flex-direction: column; align-items: center; text-align: center; line-height: 16px; white-space: nowrap; letter-spacing: -.3px; margin-top: -1px; }
.tool svg { width: 32px; height: 32px; margin-bottom: 3px; }
.group small { font-size: 10px; line-height: 13px; text-align: center; letter-spacing: -.25px; }
.g-visuals { width: 108px; }
.g-visuals .tools { grid-template-columns: 45px 45px; padding-left: 6px; }
.g-pages { width: 59px; }
.g-pages .tools { grid-template-columns: 56px; }
.g-elements { width: 183px; }
.g-elements .tools { grid-template-columns: 42px 42px 43px 40px; padding-left: 7px; }
.g-platform { width: 85px; }
.g-platform .tools { grid-template-columns: 84px; }
.g-ai { width: 118px; }
.g-ai .tools { grid-template-columns: 50px 50px; justify-items: center; padding-left: 3px; }
.chev { display: inline-block; width: 4px; height: 4px; border: solid #3b3a39; border-width: 0 1.3px 1.3px 0; transform: rotate(45deg); margin: 0 2px 3px 4px; }
.chev.solo { margin: 0 2px 3px 0; }
.collapse { margin: 79px 4px 0 auto; }

.main { display: grid; grid-template-columns: 41px 963px 181px 180px; min-height: 0; }
.rail { border-right: 1px solid #e1dfdd; }
.rail-item { height: 40px; display: flex; align-items: center; justify-content: center; padding-left: 2px; }
.rail-item.on { border-left: 3px solid #f2c811; padding: 0 1px 0 0; }
.center { display: grid; grid-template-rows: 516px 36px; min-height: 0; }
.workspace { display: grid; grid-template-columns: 763px 200px; min-height: 0; }
.report { background: #3a3a3a; min-width: 0; }
.banner { height: 32px; background: #163a5e; box-shadow: inset 0 0 0 1px #7d8169; }
.banner-text { font: bold 18px "DejaVu Sans Condensed", "DejaVu Sans", "Waree", "Loma", "Garuda", "Noto Sans Thai Looped", "Noto Sans Thai", sans-serif; fill: #fff; }
.canvas { height: 397px; display: flex; }
.slicer { width: 100px; background: #1c1c1c; padding: 2px 3px 0 8px; font: bold 9px/12px "Liberation Sans", Arial, sans-serif; color: #fff; }
.slicer ul { list-style: none; font-size: 7.7px; font-weight: 400; color: #c9c9c9; -webkit-text-stroke: .2px #c9c9c9; margin-top: 2px; }
.slicer li { height: 11.33px; line-height: 10px; display: flex; align-items: center; white-space: nowrap; background: linear-gradient(#393939, #393939) 12px 1px / 77px 10px no-repeat; }
.slicer li::before { content: ""; width: 7px; height: 7px; border: 1px solid #ddd; margin-right: 5px; flex: none; }
.slicer li.sel::before { border-color: transparent; }
.col-chart { width: 212px; margin-left: 15px; padding-top: 10px; }
.barchart { background: #000; border-radius: 12px; }
.barchart text, .kpis text { font-family: "Liberation Sans", Arial, sans-serif; }
.ct { font-size: 10.800px; font-weight: bold; fill: #fff; }
.lg { font-size: 8px; }
.lg text { fill: #bbb; stroke: #bbb; stroke-width: .2px; }
.ax { font-size: 7px; fill: #b8b8b8; }
.at { font-size: 8.800px; font-weight: bold; fill: #fff; }
.barchart .dl { font-size: 12px; font-weight: bold; fill: #fff; }
.barchart .dl text { font-family: "Open Sans", sans-serif; font-weight: 600; }
.namecard { height: 54px; margin-top: 8px; background: #000; color: #fff; text-align: center; font: 36px/52px "Liberation Sans", Arial, sans-serif; letter-spacing: -.2px; }
.col-map { margin-left: 17px; padding-top: 10px; }
.mapcard { width: 408px; height: 200px; margin-left: 3px; background: #000; border-radius: 3px; padding: 0 5px; }
.mapcard h2 { height: 17px; font: bold 10.5px/17px "Liberation Sans", Arial, sans-serif; text-align: center; color: #fff; }
.ml { font: 23.500px "Open Sans", sans-serif; fill: #505b5e; }
.inside { fill: #2e4850; }
.big { font-size: 31px; fill: #34454c; }
.shield { font: bold 14px "Open Sans", sans-serif; fill: #fff; }
.bridge { font: 16px "Open Sans", sans-serif; fill: #b643b0; }
.bing { font: 600 22px "Open Sans", sans-serif; fill: #222; }
.copy { font: 15px "Liberation Sans", sans-serif; fill: #65708a; }
.terms { fill: #4862bd; text-decoration: underline; }
.kpis .th text { font: bold 18px "Waree", "Loma", "Garuda", "Noto Sans Thai Looped", "Noto Sans Thai", sans-serif; fill: #fff; }
.num { font-size: 36px; fill: #fff; }
.cap { font-size: 11px; font-weight: bold; fill: #fff; }
.plots { display: flex; align-items: flex-start; }
.plots svg { background: #fff; }
.p2 { margin-left: 6px; }
.p3 { margin: 1px 0 0 7px; }
.box { fill: #fff; stroke: #aaa; stroke-width: .7px; }
.ticks { stroke: #777; stroke-width: .6px; }
.tk { font: 3.600px "DejaVu Sans", sans-serif; fill: #444; }
.edge { height: 13px; background: linear-gradient(#6b6b6b, #3a3a3a); }

.filters { background: #3a3a3a; color: #fff; border-left: 1px solid #a8a8a8; }
.fhead { height: 45px; display: flex; align-items: center; padding: 0 10px 1px 12px; }
.fhead b { font-size: 14.500px; font-weight: 600; margin-left: 7px; letter-spacing: -.15px; }
.eye { margin: 3px 19px 0 auto; }
.fgo { margin-top: 3px; }
.fsearch { height: 30px; width: 180px; margin: 7px 0 4px 8px; border: 1px solid #a6a6a6; border-radius: 2px; display: flex; align-items: center; padding: 2px 0 0 9px; gap: 8px; font-size: 12.500px; }
.fsec { padding: 0 12px 0 8px; height: 97px; }
.fsearch + .fsec { border-top: 1px solid #a6a6a6; padding-top: 17px; height: 115px; }
.fsec p { line-height: 16px; display: flex; justify-content: space-between; letter-spacing: -.25px; padding-right: 3px; }
.fsec p i { letter-spacing: 1px; }
.well { height: 46px; margin-top: 8px; border: 1px solid #c6c6c6; border-radius: 2px; display: flex; align-items: center; justify-content: center; letter-spacing: -.2px; }

.pagetabs { background: #e9e9e9; border-top: 1px solid #f3f2f1; border-bottom: 1px solid #d2d0ce; display: flex; }
.arrows { width: 39px; padding: 13px 0 0 6px; }
.page { width: 76px; background: #fff; border-left: 1px solid #888; border-bottom: 2px solid #f2c811; line-height: 36px; text-align: center; letter-spacing: -.2px; padding-left: 2px; }
.plus { width: 40px; background: #f2c811; display: flex; align-items: center; justify-content: center; padding: 0 1px 2px 0; }

.viz, .fields { border-left: 1px solid #dad8d6; border-bottom: 1px solid #d2d0ce; min-width: 0; }
.panehead { display: flex; align-items: center; justify-content: space-between; height: 48px; padding: 0 11px 0 12px; color: #4a4846; font-size: 15px; letter-spacing: -.3px; }
.panehead b { font-weight: 600; }
.viz .panehead b { letter-spacing: -.12px; }
.icons { display: grid; grid-template-columns: repeat(6, 28px); grid-auto-rows: 24px; place-items: center; padding: 2px 0 0 4px; height: 150px; }
.icons svg { width: 18px; height: 18px; }
.icons .purple { width: 20px; height: 20px; }
.axis { fill: none; stroke: #8a8886; }
.n123 { font: 6px "Open Sans", sans-serif; fill: #447fae; }
.letterR { font: bold 18px "Open Sans", sans-serif; fill: #729fcf; }
.letterPy { font: 600 14px "Open Sans", sans-serif; fill: #6d97c7; }
.modes { display: flex; border-top: 1px solid #dad8d6; height: 36px; padding-left: 12px; margin-top: -3px; }
.mode { width: 40px; display: flex; justify-content: center; padding-top: 7px; }
.mode.on { border-bottom: 4px solid #eac52e; }
.values { line-height: 17px; margin: 5px 0 5px 12px; }
.drop { height: 28px; width: 170px; margin-left: 4px; border: 1px dashed #b8b6b4; background: #fff; line-height: 27px; padding-left: 10px; letter-spacing: -.28px; white-space: nowrap; }
.viz h3 { font-size: 15px; font-weight: 600; color: #4a4846; line-height: 20px; margin: 14px 0 14px 14px; letter-spacing: 0; }
.opt { margin-left: 9px; line-height: 17px; letter-spacing: -.25px; }
.toggle { display: flex; align-items: center; height: 17px; margin: 12px 0 18px 18px; gap: 3px; letter-spacing: -.2px; }
.drop.last { height: 26px; line-height: 25px; padding-left: 8px; margin-top: -5px; }
.fields .panehead { padding-right: 10px; }
.search { height: 30px; width: 172px; margin: 4px 0 0 4px; border: 1px solid #c1bfbd; border-radius: 2px; background: #fff; display: flex; align-items: center; gap: 6px; padding-left: 11px; font-size: 12.500px; letter-spacing: -.1px; box-shadow: 0 5px 0 0 #f3f2f1, 0 6px 0 0 #dad8d6; }
.frow { height: 24px; display: grid; grid-template-columns: 20px 13px 17px 1fr; align-items: center; padding-left: 12px; letter-spacing: -.15px; }
.frow u { width: 12px; height: 12px; border: 1px solid #6b6967; border-radius: 2px; }
.frow em { text-align: center; font: 600 14px/16px "Liberation Sans", sans-serif; padding-left: 1px; }
.frow span { padding-left: 7px; }
.open { width: 8px; height: 8px; border: solid #777; border-width: 0 1px 1px 0; transform: rotate(45deg); margin: -5px 0 0 2px; }
.cal { margin-left: 3px; }
.frow.table { display: flex; padding-left: 5px; margin: 15px 0 6px; }
.frow .tb { margin-left: 7px; }
.frow.table span { padding-left: 11px; }

.status { padding-left: 5px; font-size: 10.500px; line-height: 24px; letter-spacing: 0; }
.taskbar { background: #171819; color: #fff; display: flex; align-items: center; }
.apps { display: flex; height: 29px; flex: 1; margin-left: -1px; }
.ta { width: 37px; display: flex; align-items: center; justify-content: center; border-bottom: 1px solid transparent; }
.ta svg { width: 20px; height: 20px; }
.run { background: linear-gradient(#74b5e8, #74b5e8) 50% 100% / 28px 2px no-repeat; border: 0; }
.active { background: linear-gradient(#74b5e8, #74b5e8) 50% 100% / 37px 2px no-repeat #444; }
.w { font: bold 8px "Open Sans", sans-serif; fill: #fff; }
.lang { font: 12px "Waree", "Loma", "Noto Sans Thai Looped", "Noto Sans Thai", sans-serif; fill: #fff; stroke: none; }
.clock { width: 64px; margin-left: 15px; letter-spacing: -.3px; }
.note { margin: 0 24px 0 0; }
```
